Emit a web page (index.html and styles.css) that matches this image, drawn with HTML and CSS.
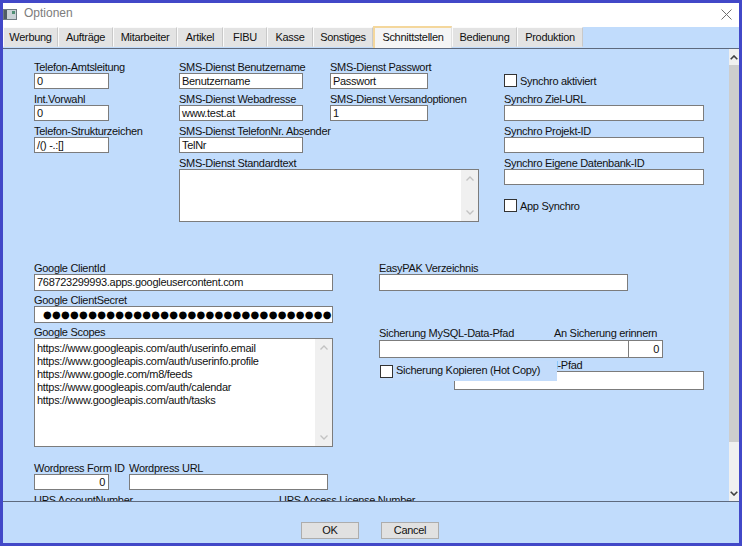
FILE: index.html
```html
<!DOCTYPE html>
<html lang="de">
<head>
<meta charset="utf-8">
<title>Optionen</title>
<link rel="stylesheet" href="styles.css">
</head>
<body>
<div class="window">
  <div class="titlebar">
    <svg class="appicon" width="14" height="11" viewBox="0 0 14 11">
      <rect x="0.5" y="0.5" width="13" height="10" fill="#c9d2d6" stroke="#6f7a80"/>
      <rect x="1" y="1" width="3" height="9" fill="#4e5c64"/>
      <rect x="9" y="2" width="3" height="3" fill="#4f8f74"/>
    </svg>
    <span class="title">Optionen</span>
    <svg class="close" width="11" height="11" viewBox="0 0 11 11">
      <path d="M0.5 0.5L10.5 10.5M10.5 0.5L0.5 10.5" stroke="#707070" stroke-width="1" fill="none"/>
    </svg>
  </div>

  <div class="tabs">
    <div class="tab">Werbung</div>
    <div class="tab">Aufträge</div>
    <div class="tab">Mitarbeiter</div>
    <div class="tab">Artikel</div>
    <div class="tab">FIBU</div>
    <div class="tab">Kasse</div>
    <div class="tab">Sonstiges</div>
    <div class="tab active">Schnittstellen</div>
    <div class="tab">Bedienung</div>
    <div class="tab">Produktion</div>
  </div>

  <div class="panel">
    <div class="form">
      <div class="top">
        <div class="col-a">
          <div class="field"><div class="lbl">Telefon-Amtsleitung</div><div class="inp">0</div></div>
          <div class="field"><div class="lbl">Int.Vorwahl</div><div class="inp">0</div></div>
          <div class="field"><div class="lbl">Telefon-Strukturzeichen</div><div class="inp">/() -.:[]</div></div>
        </div>

        <div class="sms">
          <div class="sms-row">
            <div class="col-b">
              <div class="field"><div class="lbl">SMS-Dienst Benutzername</div><div class="inp">Benutzername</div></div>
              <div class="field"><div class="lbl">SMS-Dienst Webadresse</div><div class="inp">www.test.at</div></div>
              <div class="field"><div class="lbl">SMS-Dienst TelefonNr. Absender</div><div class="inp">TelNr</div></div>
            </div>
            <div class="col-c">
              <div class="field"><div class="lbl">SMS-Dienst Passwort</div><div class="inp">Passwort</div></div>
              <div class="field"><div class="lbl">SMS-Dienst Versandoptionen</div><div class="inp">1</div></div>
            </div>
          </div>
          <div class="field-last">
            <div class="lbl">SMS-Dienst Standardtext</div>
            <div class="ta ta-std">
              <div class="ta-text"></div>
              <div class="ta-sb">
                <div class="ta-btn"><svg width="8" height="5" viewBox="0 0 8 5"><polyline points="0.5,4.5 4,1 7.5,4.5" fill="none" stroke="#c2c2c2" stroke-width="1.3"/></svg></div>
                <div class="ta-btn"><svg width="8" height="5" viewBox="0 0 8 5"><polyline points="0.5,0.5 4,4 7.5,0.5" fill="none" stroke="#c2c2c2" stroke-width="1.3"/></svg></div>
              </div>
            </div>
          </div>
        </div>

        <div class="col-d">
          <div class="lbl"></div>
          <div class="chk chk-sync"><span class="box"></span>Synchro aktiviert</div>
          <div class="field"><div class="lbl">Synchro Ziel-URL</div><div class="inp"></div></div>
          <div class="field"><div class="lbl">Synchro Projekt-ID</div><div class="inp"></div></div>
          <div class="field"><div class="lbl">Synchro Eigene Datenbank-ID</div><div class="inp"></div></div>
          <div class="chk chk-app"><span class="box"></span>App Synchro</div>
        </div>
      </div>

      <div class="bottom">
        <div class="gcol">
          <div class="gfield"><div class="lbl">Google ClientId</div><div class="inp inp-l">768723299993.apps.googleusercontent.com</div></div>
          <div class="gfield"><div class="lbl">Google ClientSecret</div><div class="inp inp-l dots">●●●●●●●●●●●●●●●●●●●●●●●●●●●●●●●●●●●●</div></div>
          <div class="gfield-last">
            <div class="lbl">Google Scopes</div>
            <div class="ta ta-scopes">
              <div class="ta-text">
                <div class="line">https://www.googleapis.com/auth/userinfo.email</div>
                <div class="line">https://www.googleapis.com/auth/userinfo.profile</div>
                <div class="line">https://www.google.com/m8/feeds</div>
                <div class="line">https://www.googleapis.com/auth/calendar</div>
                <div class="line">https://www.googleapis.com/auth/tasks</div>
              </div>
              <div class="ta-sb">
                <div class="ta-btn"><svg width="8" height="5" viewBox="0 0 8 5"><polyline points="0.5,4.5 4,1 7.5,4.5" fill="none" stroke="#c2c2c2" stroke-width="1.3"/></svg></div>
                <div class="ta-btn"><svg width="8" height="5" viewBox="0 0 8 5"><polyline points="0.5,0.5 4,4 7.5,0.5" fill="none" stroke="#c2c2c2" stroke-width="1.3"/></svg></div>
              </div>
            </div>
          </div>
          <div class="wp-row">
            <div class="wp-id"><div class="lbl">Wordpress Form ID</div><div class="inp num">0</div></div>
            <div class="wp-url"><div class="lbl">Wordpress URL</div><div class="inp"></div></div>
          </div>
          <div class="ups-row">
            <div class="lbl ups-acc">UPS AccountNumber</div>
            <div class="lbl">UPS Access License Number</div>
          </div>
        </div>

        <div class="rcol">
          <div class="field-easy"><div class="lbl">EasyPAK Verzeichnis</div><div class="inp inp-l easy"></div></div>
          <div class="mysql-lbls">
            <div class="lbl mysql-l1">Sicherung MySQL-Data-Pfad</div>
            <div class="lbl">An Sicherung erinnern</div>
          </div>
          <div class="mysql-inps">
            <div class="inp mysql-path"></div>
            <div class="inp num mysql-num">0</div>
          </div>
          <div class="copy-field">
            <div class="lbl copy-lbl">Sicherung Kopieren Ziel-Pfad</div>
            <div class="inp copy-inp"></div>
          </div>
          <div class="chk chk-hot"><span class="box"></span>Sicherung Kopieren (Hot Copy)</div>
        </div>
      </div>
    </div>

    <div class="vscroll">
      <div class="sb-btn"><svg width="8" height="5" viewBox="0 0 8 5"><polyline points="0.7,4.3 4,1 7.3,4.3" fill="none" stroke="#404040" stroke-width="1.6"/></svg></div>
      <div class="sb-thumb"></div>
      <div class="sb-track"></div>
      <div class="sb-btn"><svg width="8" height="5" viewBox="0 0 8 5"><polyline points="0.7,0.7 4,4 7.3,0.7" fill="none" stroke="#404040" stroke-width="1.6"/></svg></div>
    </div>
  </div>

  <div class="footer">
    <div class="btn">OK</div>
    <div class="btn">Cancel</div>
  </div>
</div>
</body>
</html>
```

FILE: styles.css
```css
* { box-sizing: border-box; }

html, body {
  margin: 0;
  padding: 0;
}

body {
  width: 742px;
  height: 546px;
  overflow: hidden;
  background: #4248c8;
  font-family: "Liberation Sans", Arial, sans-serif;
  font-size: 11px;
  letter-spacing: -0.3px;
  color: #111;
}

.window {
  width: 742px;
  height: 546px;
  border: 3px solid #4248c8;
  display: flex;
  flex-direction: column;
  background: #c1dcfc;
}

/* title bar */
.titlebar {
  height: 24px;
  flex: none;
  background: #fff;
  display: flex;
  align-items: flex-start;
}

.appicon {
  margin-top: 6px;
  flex: none;
}

.title {
  margin-top: 3px;
  margin-left: 7px;
  font-size: 12px;
  line-height: 14px;
  letter-spacing: 0;
  color: #7c7c7c;
}

.close {
  margin-left: auto;
  margin-top: 6px;
  margin-right: 7px;
}

/* tabs */
.tabs {
  height: 21px;
  flex: none;
  display: flex;
  align-items: flex-end;
}

.tab {
  height: 20px;
  margin-bottom: 1px;
  border: 1px solid;
  border-color: #fbfbfb #c9c9c9 #e3e3e3 #fbfbfb;
  background: #e3e3e3;
  text-align: center;
  line-height: 18px;
  white-space: nowrap;
  color: #111;
}

.tab:nth-child(1) { width: 55px; }
.tab:nth-child(2) { width: 55px; }
.tab:nth-child(3) { width: 64px; }
.tab:nth-child(4) { width: 46px; }
.tab:nth-child(5) { width: 44px; }
.tab:nth-child(6) { width: 46px; }
.tab:nth-child(7) { width: 60px; }
.tab:nth-child(8) { width: 79px; }
.tab:nth-child(9) { width: 65px; }
.tab:nth-child(10) { width: 66px; }

.tab.active {
  height: 22px;
  margin-bottom: 0;
  background: #f5f5f5;
  border-color: #f4d79c #e0e0e0 #f5f5f5 #f4d79c;
  border-width: 2px 1px 0 2px;
  line-height: 19px;
}

/* panel */
.panel {
  height: 453px;
  flex: none;
  border-top: 1px solid #5e6a7e;
  display: flex;
}

.form {
  flex: 1;
  position: relative;
  overflow: hidden;
  padding: 12px 0 0 31px;
}

.lbl {
  height: 12px;
  line-height: 12px;
  white-space: nowrap;
}

.inp {
  height: 16px;
  border: 1px solid #7c7c7c;
  background: #fff;
  padding: 0 2px;
  line-height: 14px;
  white-space: nowrap;
  overflow: hidden;
}

.inp.num {
  text-align: right;
  padding-right: 3px;
}

.field {
  margin-bottom: 4px;
}

/* top section */
.top {
  display: flex;
  align-items: flex-start;
  height: 161px;
}

.col-a { width: 75px; flex: none; }

.sms {
  width: 300px;
  flex: none;
  margin-left: 70px;
}

.sms-row { display: flex; }

.col-b { width: 124px; flex: none; }

.col-c {
  width: 98px;
  flex: none;
  margin-left: 27px;
}

.ta {
  border: 1px solid #7c7c7c;
  background: #fff;
  display: flex;
}

.ta-std { height: 53px; }

.ta-text {
  flex: 1;
  padding: 3px 0 0 2px;
  overflow: hidden;
}

.ta-sb {
  width: 17px;
  flex: none;
  background: #f0f0f0;
  display: flex;
  flex-direction: column;
  justify-content: space-between;
}

.ta-btn {
  height: 17px;
  display: flex;
  align-items: center;
  justify-content: center;
}

.col-d {
  width: 200px;
  flex: none;
  margin-left: 25px;
}

.chk {
  display: flex;
  align-items: flex-start;
  white-space: nowrap;
}

.box {
  width: 13px;
  height: 13px;
  flex: none;
  border: 1px solid #333;
  background: #fff;
  margin-right: 3px;
}

.chk-sync {
  height: 16px;
  line-height: 16px;
  margin-bottom: 4px;
}

.chk-sync .box { margin-top: 1px; }

.chk-app {
  margin-top: 14px;
  line-height: 15px;
}

/* bottom section */
.bottom {
  display: flex;
  align-items: flex-start;
  margin-top: 40px;
}

.gcol {
  width: 299px;
  flex: none;
}

.inp-l {
  height: 17px;
  line-height: 15px;
}

.gfield { margin-bottom: 3px; }

.dots {
  font-family: "DejaVu Sans", sans-serif;
  font-size: 10px;
  letter-spacing: 0.3px;
  padding-left: 8px;
  color: #000;
}

.ta-scopes { height: 109px; }

.ta-scopes .ta-text { padding: 3px 0 0 2px; }

.line {
  height: 13px;
  line-height: 13px;
  white-space: nowrap;
}

.wp-row {
  display: flex;
  margin-top: 15px;
}

.wp-id { width: 75px; flex: none; }

.wp-url {
  width: 199px;
  flex: none;
  margin-left: 20px;
}

.ups-row {
  display: flex;
  margin-top: 4px;
}

.ups-acc { width: 245px; flex: none; }

.rcol {
  position: relative;
  width: 325px;
  flex: none;
  margin-left: 46px;
}

.easy { width: 249px; }

.mysql-lbls {
  display: flex;
  margin-top: 36px;
  height: 13px;
}

.mysql-l1 { width: 175px; flex: none; }

.mysql-inps { display: flex; }

.mysql-path {
  width: 250px;
  height: 18px;
}

.mysql-num {
  width: 35px;
  height: 18px;
  margin-left: -1px;
  line-height: 16px;
}

.copy-field {
  margin-left: 75px;
  padding-top: 1px;
}

.copy-lbl { margin-left: -7px; }

.copy-inp {
  width: 250px;
  height: 19px;
}

.chk-hot {
  position: absolute;
  left: 0;
  top: 99px;
  width: 178px;
  height: 20px;
  padding-top: 3px;
  line-height: 13px;
  background: #c3dcfb;
}

.chk-hot .box {
  margin-top: 1px;
  margin-left: 1px;
}

/* main vertical scrollbar */
.vscroll {
  width: 10px;
  flex: none;
  background: #f0f0f0;
  display: flex;
  flex-direction: column;
}

.sb-btn {
  height: 16px;
  flex: none;
  display: flex;
  align-items: center;
  justify-content: center;
}

.sb-thumb {
  height: 377px;
  flex: none;
  background: #cdcdcd;
}

.sb-track { flex: 1; }

/* footer */
.footer {
  flex: 1;
  border-top: 1px solid #5e6a7e;
  display: flex;
  justify-content: center;
  align-items: flex-start;
  gap: 22px;
  padding-top: 20px;
  padding-right: 2px;
}

.btn {
  width: 58px;
  height: 17px;
  border: 1px solid #adadad;
  background: #e1e1e1;
  text-align: center;
  line-height: 15px;
  color: #111;
}
```
